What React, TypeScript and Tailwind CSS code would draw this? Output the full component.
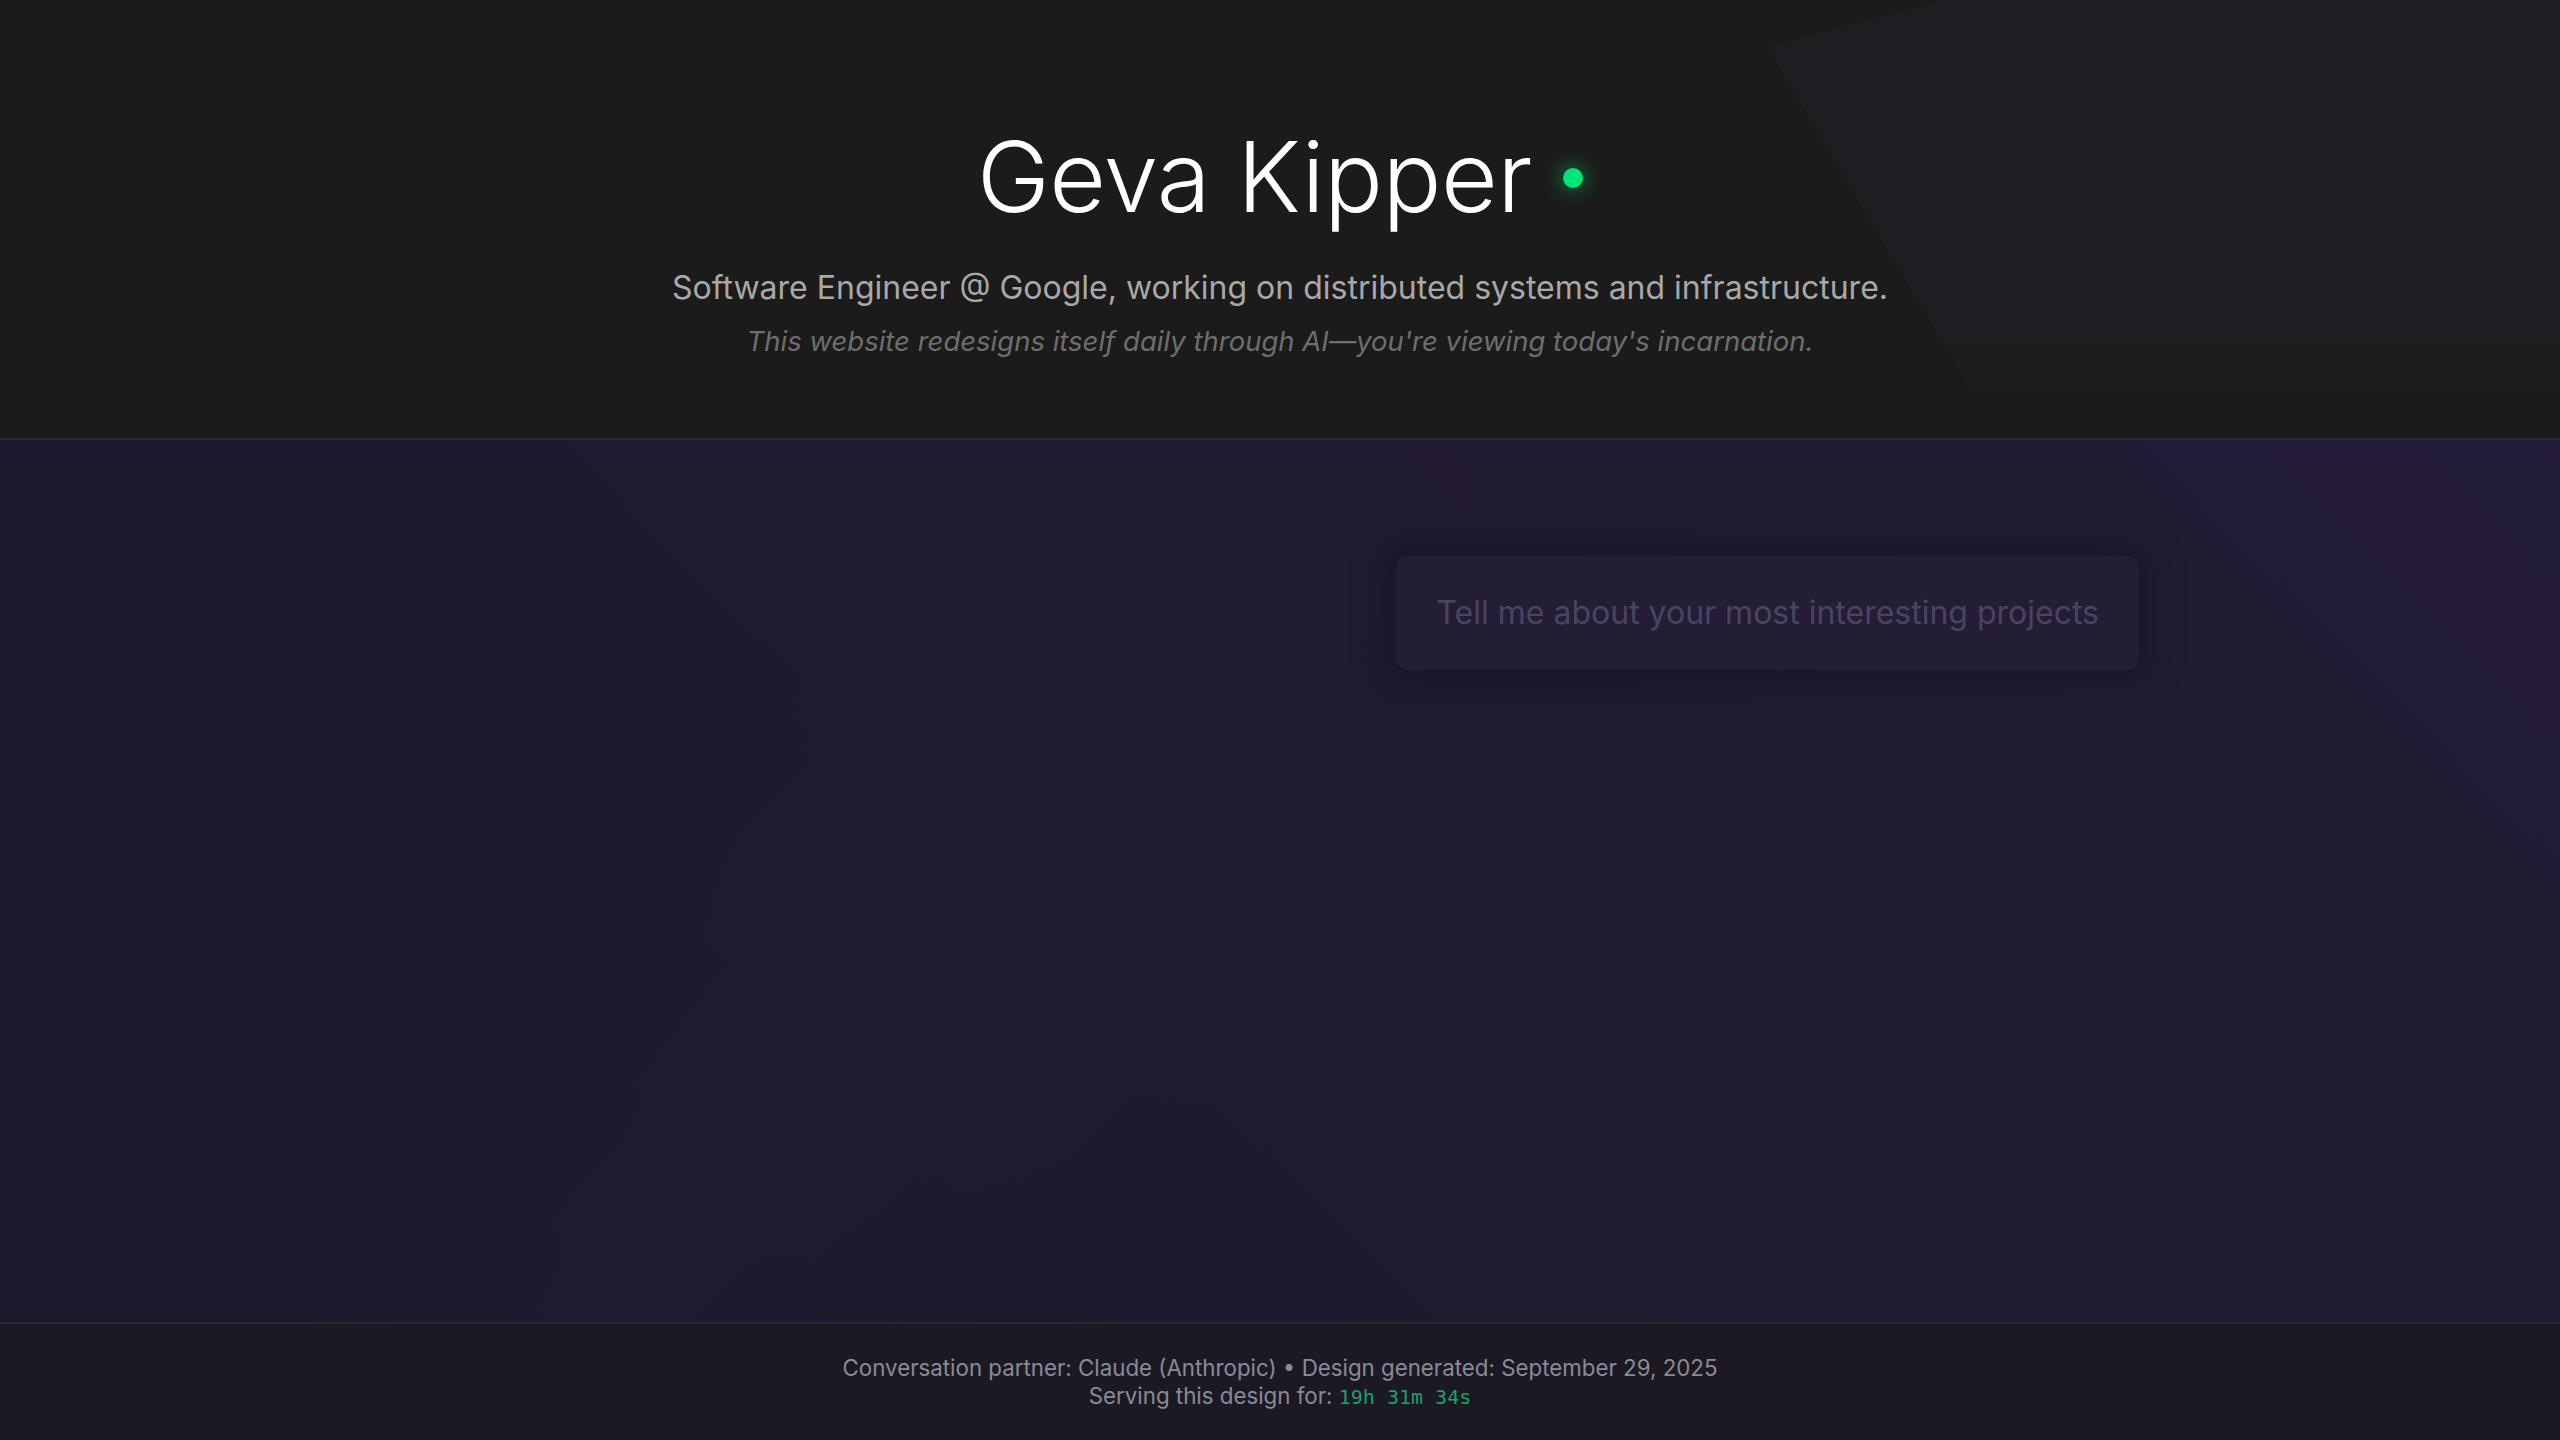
export default function App() {
  return (
    <div className="min-h-screen flex flex-col bg-[#1b1b1b] font-['Inter','Noto_Sans',sans-serif]">
      {/* header */}
      <header className="relative h-[440px] shrink-0 overflow-hidden border-b-2 border-[#2d2d31] bg-[#1b1b1b]">
        <div className="absolute inset-0 bg-[linear-gradient(to_bottom,#1e1d21_75%,#1b1b1b_95%)] [clip-path:polygon(1767px_47px,1945px_0px,2560px_0px,2560px_440px,2001px_440px)]" />
        <div className="relative flex flex-col items-center pt-[128px]">
          <h1 className="flex items-center text-[98px] font-light leading-none tracking-[-0.5px] text-white">
            Geva Kipper
            <span className="ml-[31px] mt-[2px] h-[20px] w-[20px] rounded-full bg-[#00e676] shadow-[0_0_18px_4px_rgba(0,230,118,0.35)]" />
          </h1>
          <p className="mt-[38px] text-[32px] leading-[48px] text-[#a8a8a8]">
            Software Engineer @ Google, working on distributed systems and infrastructure.
          </p>
          <p className="mt-[9px] text-[27.5px] italic leading-[40px] text-[#6e6e6e]">
            This website redesigns itself daily through AI—you're viewing today's incarnation.
          </p>
        </div>
      </header>

      {/* conversation */}
      <main className="relative flex-1 overflow-hidden bg-[linear-gradient(45deg,#1b192c_0%,#1e1a2f_50%,#241c37_100%)]">
        <div className="absolute inset-0 bg-[linear-gradient(135deg,transparent_30%,rgba(40,30,60,0.14)_42%,transparent_55%)]" />
        <div className="relative mx-auto flex max-w-[1820px] flex-col items-end px-[51px] pt-[116px]">
          <div className="rounded-[12px] bg-[#241d36] px-[40px] py-[35px] shadow-[0_0_30px_12px_rgba(24,18,38,0.6)]">
            <p className="text-[32px] leading-[44px] text-[#4b4360]">
              Tell me about your most interesting projects
            </p>
          </div>
        </div>
      </main>

      {/* footer */}
      <footer className="h-[118px] shrink-0 border-t-2 border-[#2a2838] bg-[#1b1a24] pt-[30px] text-center text-[22.3px] leading-[28px] text-[#8b8a96]">
        <p>Conversation partner: Claude (Anthropic) • Design generated: September 29, 2025</p>
        <p>
          Serving this design for:{" "}
          <span className="font-['DejaVu_Sans_Mono',monospace] text-[20px] text-[#1f9e6a]">19h 31m 34s</span>
        </p>
      </footer>
    </div>
  );
}
